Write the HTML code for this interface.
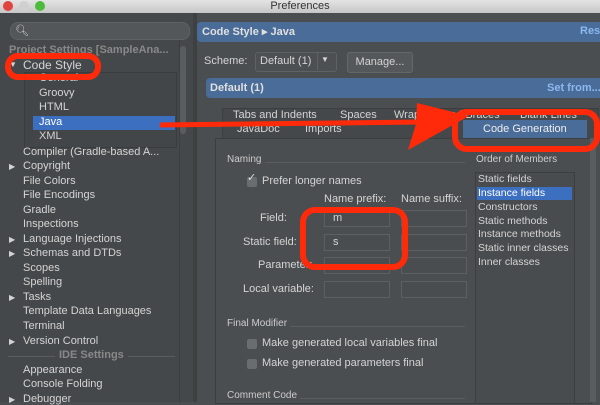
<!DOCTYPE html><html><head><style>
body{margin:0;width:600px;height:402px;overflow:hidden;background:#4b4e50;font-family:"Liberation Sans",sans-serif;font-size:11px;color:#d4d4d4;position:relative}
.a{position:absolute;white-space:nowrap}
.tr{left:23px}
.ar{left:9px;font-size:8px}
.inp{position:absolute;width:66px;height:17px;border:1px solid #5d6062;background:#4a4d4f;box-sizing:border-box;padding-left:8px;line-height:15px}
.cb{position:absolute;width:10px;height:10px;background:#6a6d6f;border-radius:2px}
</style></head><body>
<div class="a" style="left:0;top:0;width:600px;height:13px;background:linear-gradient(#e4e4e4,#c6c6c6);color:#333;text-align:center;line-height:12px;font-size:11px">Preferences</div>
<div class="a" style="left:3px;top:1px;width:10px;height:10px;border-radius:50%;background:#e0443e"></div>
<div class="a" style="left:19px;top:1px;width:10px;height:10px;border-radius:50%;background:#d0d0d0"></div>
<div class="a" style="left:35px;top:1px;width:10px;height:10px;border-radius:50%;background:#4dbb3b"></div>
<div class="a" style="left:0;top:13px;width:193px;height:389px;background:#45484a"></div>
<div class="a" style="left:10px;top:22px;width:178px;height:16px;border-radius:8px;background:#54575a;border:1px solid #5f6264"></div>
<div class="a" style="left:15px;top:24px;font-size:11px;color:#ccc">&#x1F50D;&#xFE0E;</div>
<div class="a" style="left:9px;top:44px;color:#888;font-weight:bold">Project Settings [SampleAna...</div>
<div class="a" style="left:24px;top:72px;width:151px;height:74px;border:1px solid #3a3c3e;background:#434648"></div>
<div class="a" style="left:33px;top:116px;width:142px;height:14px;background:#3d6fc0"></div>
<div class="a" style="left:180px;top:46px;width:6px;height:88px;background:#5a5d5f;border-radius:3px"></div>
<div class="a" style="left:179px;top:40px;width:1px;height:362px;background:#3c3e40"></div>
<div class="a" style="left:193px;top:13px;width:4px;height:389px;background:#3e4042"></div>
<div class="a ar" style="top:60px">▼</div><div class="a tr" style="top:58px;font-size:12px">Code Style</div>
<div class="a" style="left:39px;top:72px">General</div>
<div class="a" style="left:39px;top:87px">Groovy</div>
<div class="a" style="left:39px;top:101px">HTML</div>
<div class="a" style="left:39px;top:116px;color:#fff">Java</div>
<div class="a" style="left:39px;top:130px">XML</div>
<div class="a tr" style="top:146px">Compiler (Gradle-based A...</div>
<div class="a ar" style="top:162px">▶</div><div class="a tr" style="top:160px">Copyright</div>
<div class="a tr" style="top:175px">File Colors</div>
<div class="a tr" style="top:189px">File Encodings</div>
<div class="a tr" style="top:204px">Gradle</div>
<div class="a tr" style="top:218px">Inspections</div>
<div class="a ar" style="top:235px">▶</div><div class="a tr" style="top:233px">Language Injections</div>
<div class="a ar" style="top:249px">▶</div><div class="a tr" style="top:247px">Schemas and DTDs</div>
<div class="a tr" style="top:262px">Scopes</div>
<div class="a tr" style="top:276px">Spelling</div>
<div class="a ar" style="top:293px">▶</div><div class="a tr" style="top:291px">Tasks</div>
<div class="a tr" style="top:305px">Template Data Languages</div>
<div class="a tr" style="top:320px">Terminal</div>
<div class="a ar" style="top:337px">▶</div><div class="a tr" style="top:335px">Version Control</div>
<div class="a" style="left:8px;top:356px;width:167px;height:1px;background:#5a5d5f"></div>
<div class="a" style="left:55px;top:349px;background:#45484a;padding:0 4px;color:#888;font-weight:bold">IDE Settings</div>
<div class="a tr" style="top:364px">Appearance</div>
<div class="a tr" style="top:378px">Console Folding</div>
<div class="a ar" style="top:395px">▶</div><div class="a tr" style="top:393px">Debugger</div>

<div class="a" style="left:197px;top:22px;width:403px;height:20px;background:#4a6c98;border-radius:4px 0 0 4px"></div>
<div class="a" style="left:202px;top:25px;font-weight:bold;color:#e0e0e0">Code Style ▸ Java</div>
<div class="a" style="left:580px;top:25px;font-weight:bold;color:#8cb8f0">Rese</div>
<div class="a" style="left:204px;top:55px">Scheme:</div>
<div class="a" style="left:255px;top:52px;width:80px;height:18px;border:1px solid #5f6264;border-radius:3px;background:#4d5052"></div>
<div class="a" style="left:260px;top:55px">Default (1)</div>
<div class="a" style="left:317px;top:53px;width:1px;height:17px;background:#5f6264"></div>
<div class="a" style="left:321px;top:55px;font-size:8px">▼</div>
<div class="a" style="left:347px;top:52px;width:64px;height:19px;border:1px solid #646769;border-radius:3px;background:#55585a;text-align:center;line-height:18px">Manage...</div>
<div class="a" style="left:206px;top:78px;width:394px;height:20px;background:#4a6c98;border-radius:4px 0 0 4px"></div>
<div class="a" style="left:210px;top:82px;font-weight:bold;color:#e0e0e0">Default (1)</div>
<div class="a" style="left:547px;top:82px;font-weight:bold;color:#8cb8f0">Set from...</div>

<div class="a" style="left:222px;top:108px;width:375px;height:30px;background:#45484a;border:1px solid #3c3e40"></div>
<div class="a" style="left:233px;top:109px">Tabs and Indents</div>
<div class="a" style="left:340px;top:109px">Spaces</div>
<div class="a" style="left:394px;top:109px">Wrapping and Braces</div>
<div class="a" style="left:520px;top:109px">Blank Lines</div>
<div class="a" style="left:237px;top:123px">JavaDoc</div>
<div class="a" style="left:305px;top:123px">Imports</div>
<div class="a" style="left:463px;top:120px;width:124px;height:18px;background:#4a6c98"></div>
<div class="a" style="left:483px;top:123px;color:#eee">Code Generation</div>
<div class="a" style="left:215px;top:138px;width:375px;height:264px;background:#4b4e50;border:1px solid #3c3e40"></div>
<div class="a" style="left:590px;top:138px;width:6px;height:264px;background:#5a5d5f"></div>

<div class="a" style="left:227px;top:154px;font-size:10px;color:#ccc">Naming</div>
<div class="a" style="left:265px;top:162px;width:200px;height:1px;background:#5a5d5f"></div>
<div class="cb" style="left:247px;top:177px"></div><div class="a" style="left:247px;top:171px;color:#ddd">✓</div>
<div class="a" style="left:262px;top:175px">Prefer longer names</div>
<div class="a" style="left:324px;top:193px">Name prefix:</div>
<div class="a" style="left:401px;top:193px">Name suffix:</div>
<div class="a" style="left:260px;top:212px">Field:</div>
<div class="a" style="left:243px;top:236px">Static field:</div>
<div class="a" style="left:258px;top:259px">Parameter:</div>
<div class="a" style="left:243px;top:283px">Local variable:</div>
<div class="inp" style="left:324px;top:210px">m</div><div class="inp" style="left:401px;top:210px"></div>
<div class="inp" style="left:324px;top:234px">s</div><div class="inp" style="left:401px;top:234px"></div>
<div class="inp" style="left:324px;top:257px"></div><div class="inp" style="left:401px;top:257px"></div>
<div class="inp" style="left:324px;top:281px"></div><div class="inp" style="left:401px;top:281px"></div>
<div class="a" style="left:227px;top:318px;font-size:10px;color:#ccc">Final Modifier</div>
<div class="a" style="left:290px;top:326px;width:175px;height:1px;background:#5a5d5f"></div>
<div class="cb" style="left:247px;top:339px"></div><div class="a" style="left:262px;top:337px">Make generated local variables final</div>
<div class="cb" style="left:247px;top:359px"></div><div class="a" style="left:262px;top:357px">Make generated parameters final</div>
<div class="a" style="left:227px;top:390px;font-size:10px;color:#ccc">Comment Code</div>
<div class="a" style="left:300px;top:398px;width:165px;height:1px;background:#5a5d5f"></div>
<div class="a" style="left:476px;top:154px;font-size:10px;color:#ccc">Order of Members</div>
<div class="a" style="left:475px;top:172px;width:98px;height:230px;border:1px solid #3c3e40;background:#494c4e"></div>
<div class="a" style="left:477px;top:187px;width:95px;height:13px;background:#3d6fc0"></div>
<div class="a" style="left:478px;top:173px;font-size:10.5px">Static fields</div>
<div class="a" style="left:478px;top:187px;font-size:10.5px;color:#fff">Instance fields</div>
<div class="a" style="left:478px;top:201px;font-size:10.5px">Constructors</div>
<div class="a" style="left:478px;top:215px;font-size:10.5px">Static methods</div>
<div class="a" style="left:478px;top:228px;font-size:10.5px">Instance methods</div>
<div class="a" style="left:478px;top:242px;font-size:10.5px">Static inner classes</div>
<div class="a" style="left:478px;top:256px;font-size:10.5px">Inner classes</div>

<svg class="a" style="left:0;top:0" width="600" height="402">
<g fill="none" stroke="#ff2a0a" stroke-width="6">
<rect x="8" y="56" width="90" height="21" rx="10"/>
<rect x="455" y="112" width="142" height="37" rx="12"/>
<rect x="303" y="210" width="102" height="57" rx="12"/>
</g>
<path d="M160 125 L420 122" stroke="#ff2a0a" stroke-width="5" fill="none"/>
<path d="M417 103 L469 116 L408 150 L416 124 Z" fill="#ff2a0a"/>
</svg>
</body></html>
